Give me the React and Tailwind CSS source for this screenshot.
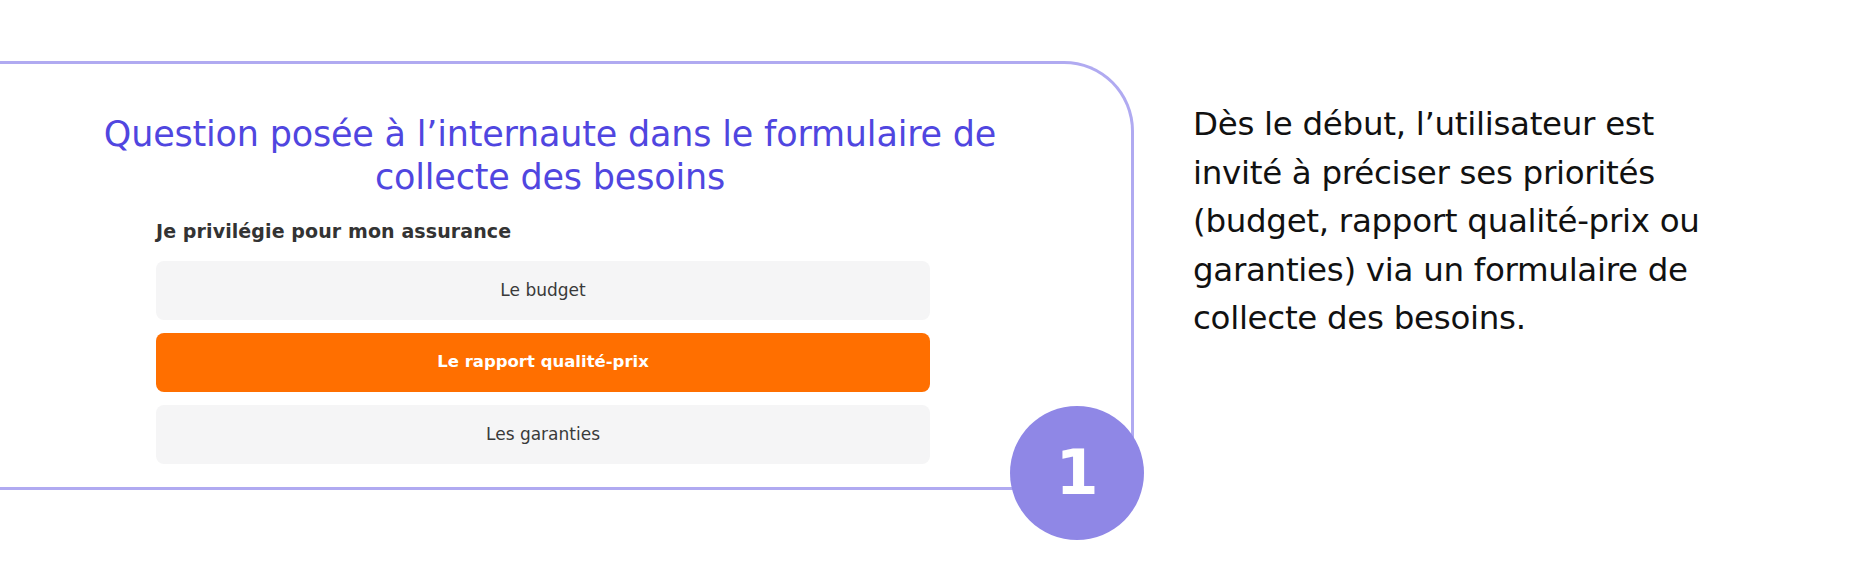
import React from 'react';

const options = [
    { label: 'Le budget', active: false },
    { label: 'Le rapport qualité-prix', active: true },
    { label: 'Les garanties', active: false },
];

const App = () => {
    return (
        <div className="bg-white w-[1854px] h-[570px] overflow-hidden flex items-start pt-[61px] font-['DejaVu_Sans',sans-serif]">
            {/* question card, cut at the left edge of the page */}
            <div className="relative shrink-0 w-[1134px] h-[429px] border-y-[3px] border-r-[3px] border-[#b0aaf1] rounded-tr-[70px] rounded-br-[40px]">
                <h2 className="ml-[50px] w-[1000px] mt-[49px] text-center text-[35px] leading-[43px] text-[#5046e0] tracking-[-0.2px]">
                    Question posée à l’internaute dans le formulaire de collecte des besoins
                </h2>
                <div className="ml-[156px] w-[774px] mt-[20px]">
                    <p className="text-[19px] leading-[24px] font-bold text-[#333333] tracking-[0.1px]">Je privilégie pour mon assurance</p>
                    <div className="flex flex-col gap-[13px] mt-[18px]">
                        {options.map((opt) => (
                            <div
                                key={opt.label}
                                className={
                                    opt.active
                                        ? 'h-[59px] rounded-lg bg-[#ff6f00] flex items-center justify-center text-[16.5px] font-bold text-white'
                                        : 'h-[59px] rounded-lg bg-[#f5f5f6] flex items-center justify-center text-[17px] text-[#3a3a3a]'
                                }
                            >
                                {opt.label}
                            </div>
                        ))}
                    </div>
                </div>
                <div className="absolute -right-[13px] -bottom-[53px] w-[134px] h-[134px] rounded-full bg-[#8f87e6] flex items-center justify-center text-white text-[62px] leading-none font-black">
                    1
                </div>
            </div>

            <p className="ml-[59px] mt-[39px] w-[530px] text-[32.5px] leading-[48.5px] text-[#111111] tracking-[-0.3px]">
                Dès le début, l’utilisateur est invité à préciser ses priorités (budget, rapport qualité-prix ou garanties) via un formulaire de collecte des besoins.
            </p>
        </div>
    );
};

export default App;
